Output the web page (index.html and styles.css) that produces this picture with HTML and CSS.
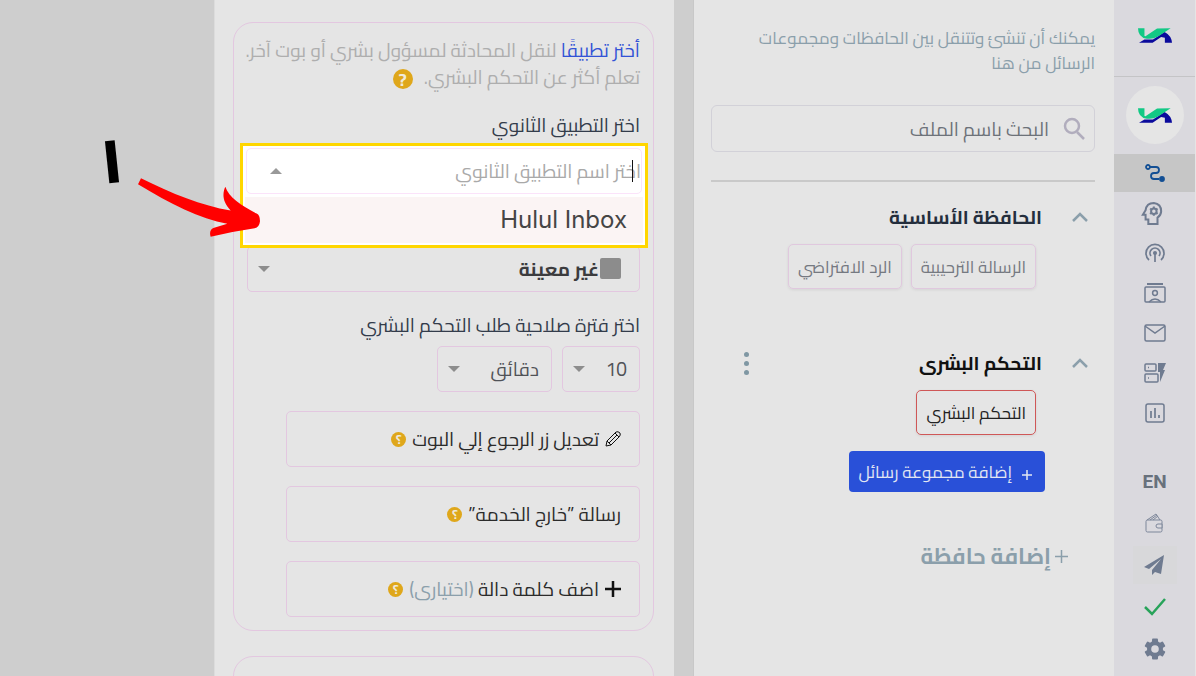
FILE: index.html
```html
<!DOCTYPE html>
<html lang="ar" dir="rtl">
<head>
    <meta charset="UTF-8">
    <meta name="viewport" content="width=device-width, initial-scale=1.0">
    <title>التحكم البشري</title>
    <link rel="stylesheet" href="styles.css">
</head>
<body>
    <svg class="defs" aria-hidden="true">
        <symbol id="logo" viewBox="0 0 100 43">
            <path fill="#0a0a9c" d="M3 43 L19 33 L44 33 L78 11 Q90 17 95 26 Q99 33 100 43 H79 V28 L68 26 L43 43 Z"/>
            <path fill="#12c985" d="M0 0 H19 V23 L22 24 L56 1 L96 0 L60 24 Q44 33 26 31 Q0 27 0 0 Z"/>
        </symbol>
    </svg>

    <div class="app">
        <nav class="sidebar">
            <a href="#" class="brand" aria-label="Hulul"><svg class="logo"><use href="#logo"/></svg></a>
            <a href="#" class="avatar" aria-label="الحساب"><svg class="logo"><use href="#logo"/></svg></a>
            <div class="menu">
                <a href="#" class="active" aria-label="المسار">
                    <svg width="20" height="20" viewBox="0 0 20 20" fill="none" stroke="#134f94" stroke-width="1.800"><circle cx="3" cy="4" r="2"/><path d="M5 4 H11 Q14 4 14 7 Q14 10 11 10 H9 Q6 10 6 13 Q6 16 9 16 H14"/><circle cx="17" cy="16" r="2" fill="#134f94"/></svg>
                </a>
                <a href="#" aria-label="الذكاء">
                    <svg class="head" width="22" height="24" viewBox="0 0 24 26" fill="none" stroke="#6f7b90" stroke-width="2.200"><path d="M8 25 V20 H5 V15 H2 L5 10 Q6 2 14 2 Q22 3 22 11 Q22 15 18 18 V25 Z"/><circle cx="14" cy="11" r="3"/><path d="M14 6 V8 M14 14 V16 M10 8 L11 9 M17 13 L18 14 M10 14 L11 13 M17 9 L18 8"/></svg>
                </a>
                <a href="#" aria-label="البث">
                    <svg width="20" height="20" viewBox="0 0 20 20" fill="none" stroke="#6f7b90" stroke-width="1.700"><path d="M4 17 A9 9 0 1 1 16 17"/><path d="M6 13 A5 5 0 1 1 14 13"/><circle cx="10" cy="10" r="1.200" fill="#6f7b90"/><path d="M10 10 V19"/></svg>
                </a>
                <a href="#" aria-label="جهات الاتصال">
                    <svg width="22" height="20" viewBox="0 0 22 20" fill="none" stroke="#6f7b90" stroke-width="1.500"><path stroke-width="2" d="M3 1 H19"/><rect x="1" y="4" width="20" height="15" rx="1"/><circle cx="11" cy="10" r="2.400"/><path d="M5 19 Q11 13 17 19"/></svg>
                </a>
                <a href="#" aria-label="البريد">
                    <svg width="22" height="18" viewBox="0 0 22 18" fill="none" stroke="#6f7b90" stroke-width="1.500"><rect x="1" y="1" width="20" height="16" rx="1.500"/><path d="M1 2 L11 9 L21 2"/></svg>
                </a>
                <a href="#" aria-label="الإجراءات">
                    <svg width="22" height="20" viewBox="0 0 22 20" fill="none" stroke="#6f7b90" stroke-width="1.500"><rect x="1" y="1" width="11" height="7" rx="1"/><rect x="1" y="11" width="13" height="8" rx="1"/><path d="M4 4.500 H5 M4 15 H5"/><path fill="#6f7b90" stroke="none" d="M14 0 H22 L19 7 H21 L16 19 V9 H14 Z"/></svg>
                </a>
                <a href="#" aria-label="التقارير">
                    <svg width="20" height="20" viewBox="0 0 20 20" fill="none" stroke="#6f7b90" stroke-width="1.500"><rect x="1" y="1" width="18" height="18" rx="2"/><path stroke-width="1.700" d="M6 8 V15 M10 5 V15 M14 12 V15"/></svg>
                </a>
            </div>
            <div class="menu tools">
                <a href="#" class="lang">EN</a>
                <a href="#" aria-label="المحفظة">
                    <svg width="19" height="20" viewBox="0 0 19 20" fill="none" stroke="#7d879a" stroke-width="1"><rect x="1" y="7" width="16" height="12" rx="1.500"/><path d="M2 7 L11 1 L15 7 M5 7 L12 2 M8 7 L13 3"/><path fill="#dad9de" d="M17 11 H13 Q11 11 11 13 Q11 15 13 15 H17 Z"/></svg>
                </a>
                <a href="#" class="send" aria-label="إرسال">
                    <svg width="21" height="21" viewBox="0 0 21 21" fill="#6f7b90"><path d="M20 0 L0 12 L5 14 L17 4 L8 15 V20 L11 17 L17 19 Z"/></svg>
                </a>
                <a href="#" aria-label="تم">
                    <svg width="22" height="18" viewBox="0 0 22 18" fill="none" stroke="#28a35a" stroke-width="2.500"><path d="M1 9 L8 16 L21 1"/></svg>
                </a>
                <a href="#" aria-label="الإعدادات">
                    <svg width="22" height="22" viewBox="0 0 22 22"><g fill="#6f7b90"><circle cx="11" cy="11" r="8"/><rect id="tooth" x="8" y="0.500" width="6" height="21" rx="1"/><use href="#tooth" transform="rotate(60 11 11)"/><use href="#tooth" transform="rotate(120 11 11)"/></g><circle cx="11" cy="11" r="3.800" fill="#dad9de"/></svg>
                </a>
            </div>
        </nav>

        <aside class="folders">
            <p class="intro">يمكنك أن تنشئ وتتنقل بين الحافظات ومجموعات الرسائل من هنا</p>
            <div class="search">
                <svg width="22" height="24" viewBox="0 0 22 24" fill="none" stroke="#b1adbd" stroke-width="2.500"><circle cx="9" cy="9" r="7"/><path d="M14 15 L21 22"/></svg>
                <input type="search" placeholder="البحث باسم الملف" aria-label="البحث باسم الملف">
            </div>
            <hr>
            <section class="folder">
                <div class="folder-head">
                    <svg class="chevron" viewBox="0 0 16 10"><path d="M1 9 L8 2 L15 9"/></svg>
                    <h2>الحافظة الأساسية</h2>
                </div>
                <div class="chips">
                    <button>الرسالة الترحيبية</button>
                    <button>الرد الافتراضي</button>
                </div>
            </section>
            <section class="folder">
                <div class="folder-head">
                    <svg class="chevron" viewBox="0 0 16 10"><path d="M1 9 L8 2 L15 9"/></svg>
                    <h2 class="dark">التحكم البشرى</h2>
                    <button class="dots" aria-label="خيارات"><i></i><i></i><i></i></button>
                </div>
                <div class="chips">
                    <button class="selected">التحكم البشري</button>
                </div>
                <button class="add-group"><svg width="10" height="10" viewBox="0 0 10 10"><path d="M5 0 V10 M0 5 H10"/></svg>إضافة مجموعة رسائل</button>
            </section>
            <button class="add-folder"><svg width="13" height="13" viewBox="0 0 13 13"><path d="M6.500 0 V13 M0 6.500 H13"/></svg>إضافة حافظة</button>
        </aside>

        <main class="content">
            <section class="card">
                <p class="hint"><a href="#">أختر تطبيقًا</a> لنقل المحادثة لمسؤول بشري أو بوت آخر. تعلم أكثر عن التحكم البشري. <span class="help big">?</span></p>
                <label class="field-label" for="app">اختر التطبيق الثانوي</label>
                <div class="stack">
                    <div class="picker">
                        <div class="picker-field">
                            <input type="text" id="app" placeholder="اختر اسم التطبيق الثانوي">
                            <span class="caret"></span>
                            <span class="arrow up"></span>
                        </div>
                        <ul role="listbox" aria-label="التطبيقات">
                            <li role="option" aria-selected="true" dir="ltr">Hulul Inbox</li>
                        </ul>
                        <span class="step">١</span>
                        <svg class="pointer" viewBox="144 146 366 176" aria-hidden="true"><path fill="#f00" d="M153 146 C245 192 335 228 422 243 C395 215 398 190 406 172 C416 203 455 230 500 252 Q510 257 510 275 Q508 293 494 296 Q430 305 362 322 Q355 299 375 294 L412 283 C330 268 240 222 144 164 Z"/></svg>
                    </div>
                    <div class="select assignee">
                        <select aria-label="المسؤول"><option>غير معينة</option></select>
                        <span class="swatch"></span>
                        <span class="arrow"></span>
                    </div>
                </div>
                <label class="field-label" for="amount">اختر فترة صلاحية طلب التحكم البشري</label>
                <div class="period">
                    <div class="select amount">
                        <select id="amount"><option>10</option></select>
                        <span class="arrow"></span>
                    </div>
                    <div class="select unit">
                        <select aria-label="الوحدة"><option>دقائق</option></select>
                        <span class="arrow"></span>
                    </div>
                </div>
                <div class="actions">
                    <button>
                        <svg width="16" height="16" viewBox="0 0 16 16" fill="none" stroke="#111" stroke-width="1"><path d="M1 15 L2 10 L11 1 Q13 0 15 2 Q16 4 14 6 L6 14 Z M2 10 L6 14 M10 2 L14 6 M4 12 L12 4"/></svg>
                        <span>تعديل زر الرجوع إلي البوت</span><span class="help">؟</span>
                    </button>
                    <button><span>رسالة ”خارج الخدمة”</span><span class="help">؟</span></button>
                    <button>
                        <svg width="16" height="16" viewBox="0 0 16 16" stroke="#111" stroke-width="2.500"><path d="M8 0 V16 M0 8 H16"/></svg>
                        <span>اضف كلمة دالة <em>(اختيارى)</em></span><span class="help">؟</span>
                    </button>
                </div>
            </section>
            <section class="card"></section>
        </main>
    </div>
</body>
</html>
```
FILE: styles.css
```css
* {
    box-sizing: border-box;
    margin: 0;
    padding: 0;
}
body {
    font-family: "Cairo", "Noto Sans Arabic", "DejaVu Sans", sans-serif;
    font-size: 17px;
    color: #2c3442;
    background: #cecece;
}
button, input, select {
    font: inherit;
    color: inherit;
    background: none;
    border: 0;
}
button {
    cursor: pointer;
}
a {
    text-decoration: none;
}
.defs {
    display: none;
}
.app {
    display: grid;
    grid-template-columns: 82px 421fr 479fr 214fr;
    height: 100vh;
    overflow: hidden;
}

/* sidebar */
.sidebar {
    display: flex;
    flex-direction: column;
    align-items: center;
    background: #dad9de;
    border-right: 1px solid #e5e5e5;
}
.brand {
    display: flex;
    justify-content: center;
    align-items: center;
    flex: none;
    width: 100%;
    height: 77px;
    padding-bottom: 6px;
    border-bottom: 1px solid #c4c4c6;
}
.logo {
    width: 34px;
    height: 15px;
}
.avatar {
    display: flex;
    justify-content: center;
    align-items: center;
    flex: none;
    width: 58px;
    height: 58px;
    margin: 9px 0 10px;
    border-radius: 50%;
    background: #e5e5e5;
}
.menu {
    display: flex;
    flex-direction: column;
    gap: 2px;
    width: 100%;
}
.menu a {
    display: flex;
    justify-content: center;
    align-items: center;
    height: 38px;
}
.menu .active {
    background: #c6c6c6;
}
.menu .head {
    margin-right: 6px;
}
.tools {
    gap: 4px;
    margin-top: 30px;
    padding-bottom: 8px;
    border-bottom: 8px solid #c9c8cd;
}
.tools .lang {
    font-family: "Roboto", sans-serif;
    font-size: 19px;
    font-weight: 700;
    color: #68717c;
}
.tools .send {
    width: 44px;
    margin: 0 auto;
    background: #d8d8da;
}

/* folders */
.folders {
    padding: 26px 19px 0 17px;
    background: #e5e5e5;
    border-left: 1px solid #c8c8c8;
}
.intro {
    line-height: 25px;
    color: #8b9fab;
}
.search {
    display: flex;
    align-items: center;
    gap: 14px;
    height: 47px;
    margin-top: 29px;
    padding: 0 9px;
    border: 1px solid #d2d1d8;
    border-radius: 6px;
}
.search input {
    flex: 1;
    min-width: 0;
    font-size: 19px;
    outline: none;
}
.search input::placeholder {
    color: #6d7279;
    opacity: 1;
}
.folders hr {
    height: 2px;
    margin: 28px 0 19px;
    border: 0;
    background: #c9c9c9;
}
.folder {
    margin-bottom: 58px;
}
.folder-head {
    display: flex;
    align-items: center;
    gap: 30px;
    height: 32px;
    padding-right: 7px;
}
.folder-head h2 {
    font-size: 19px;
    font-weight: 700;
    color: #242e3d;
}
.folder-head .dark {
    color: #111;
}
.chevron {
    width: 16px;
    height: 10px;
    fill: none;
    stroke: #8b9fab;
    stroke-width: 2.500;
}
.dots {
    display: flex;
    flex-direction: column;
    gap: 4px;
    margin-right: auto;
    padding: 4px;
    margin-left: 29px;
}
.dots i {
    width: 5px;
    height: 5px;
    border-radius: 50%;
    background: #7f97a3;
}
.chips {
    display: flex;
    gap: 9px;
    margin-top: 11px;
    padding-right: 59px;
}
.chips button {
    height: 45px;
    padding: 0 9px;
    border: 1px solid #e0c8de;
    border-radius: 5px;
    color: #757981;
    box-shadow: 0 1px 3px rgba(0, 0, 0, 0.08);
    white-space: nowrap;
}
.chips .selected {
    border-color: #cf5757;
    color: #222;
}
.add-group {
    display: flex;
    align-items: center;
    gap: 10px;
    height: 41px;
    margin: 16px 50px 0 0;
    padding: 0 13px 0 10px;
    border-radius: 4px;
    background: #2950d8;
    color: #e2e6f2;
    white-space: nowrap;
}
.add-group svg {
    margin-top: 6px;
    stroke: #e2e6f2;
    stroke-width: 1.500;
}
.add-folder {
    display: flex;
    align-items: center;
    gap: 4px;
    height: 32px;
    margin-top: -10px;
    margin-right: 27px;
    font-size: 22px;
    font-weight: 700;
    color: #8b9fab;
}
.add-folder svg {
    stroke: #8b9fab;
    stroke-width: 1.500;
}

/* content */
.content {
    margin-right: 19px;
    padding: 22px 20px 0 18px;
    background: #e5e5e5;
    border-left: 1px solid #dcdcdc;
}
.card {
    min-height: 120px;
    margin-bottom: 25px;
    padding: 14px 13px 13px;
    border: 1px solid #e3c7e0;
    border-radius: 20px;
}
.hint {
    margin-left: -8px;
    line-height: 27px;
    font-size: 19px;
    color: #aeaeae;
}
.hint a {
    color: #3353d6;
}
.help {
    display: inline-flex;
    justify-content: center;
    align-items: center;
    width: 15px;
    height: 15px;
    border-radius: 50%;
    background: #dfa71b;
    color: #f0eadb;
    font-size: 13px;
    font-weight: 700;
    line-height: 15px;
}
.help.big {
    width: 20px;
    height: 20px;
    margin-right: 7px;
    font-size: 18px;
    vertical-align: middle;
}
.field-label {
    display: block;
    line-height: 28px;
    font-size: 19px;
    color: #333c4b;
}
.hint + .field-label {
    margin-top: 20px;
}
.stack {
    position: relative;
    padding-top: 107px;
    margin-bottom: 19px;
}
.picker {
    position: absolute;
    top: 4px;
    right: -8px;
    left: -7px;
    padding: 2px;
    border: 3px solid #ffd600;
    background: #fff;
    z-index: 1;
}
.picker-field {
    position: relative;
    height: 46px;
    margin: 0 1px;
    border: 1px solid #fbe3fa;
    border-radius: 5px;
}
.picker-field input {
    width: 100%;
    height: 100%;
    font-size: 19px;
    outline: none;
}
.picker-field input::placeholder {
    color: #a9a9a9;
    opacity: 1;
}
.caret {
    position: absolute;
    top: 11px;
    right: 8px;
    width: 1px;
    height: 22px;
    background: #111;
}
.picker ul {
    margin-top: 3px;
    list-style: none;
}
.picker li {
    padding: 0 16px;
    background: #fbf4f4;
    font-family: "Inter", "Liberation Sans", sans-serif;
    font-size: 24px;
    line-height: 46px;
    text-align: right;
    color: #454545;
}
.arrow {
    position: absolute;
    top: 50%;
    left: 11px;
    margin-top: -3px;
    border: 6px solid transparent;
    border-top-color: #8d8d8d;
    border-bottom: 0;
    pointer-events: none;
}
.arrow.up {
    left: 23px;
    border-top: 0;
    border-bottom: 6px solid #999;
}
.step {
    position: absolute;
    top: -26px;
    left: -143px;
    font-size: 64px;
    font-weight: 800;
    line-height: 80px;
    color: #000;
    transform: rotate(-6deg);
}
.pointer {
    position: absolute;
    top: 32px;
    left: -105px;
    width: 122px;
    height: 59px;
}
.select {
    position: relative;
    height: 46px;
}
.select select {
    width: 100%;
    height: 100%;
    padding: 0 12px;
    appearance: none;
    border: 1px solid #e3c7e0;
    border-radius: 5px;
    font-size: 19px;
    color: #505257;
}
.assignee select {
    padding-right: 40px;
    font-weight: 700;
    color: #3c3c3e;
}
.swatch {
    position: absolute;
    top: 12px;
    right: 19px;
    width: 21px;
    height: 21px;
    border-radius: 2px;
    background: #8c8c8c;
}
.period {
    display: flex;
    gap: 10px;
    margin-top: 7px;
}
.amount {
    width: 78px;
}
.unit {
    width: 115px;
}
.actions {
    display: grid;
    gap: 19px;
    margin-top: 19px;
    padding-left: 39px;
}
.actions button {
    display: flex;
    align-items: center;
    gap: 6px;
    height: 56px;
    padding: 0 18px;
    border: 1px solid #e3c7e0;
    border-radius: 5px;
    font-size: 19px;
    color: #2b2b2b;
}
.actions em {
    font-style: normal;
    color: #8b9fab;
}
```
